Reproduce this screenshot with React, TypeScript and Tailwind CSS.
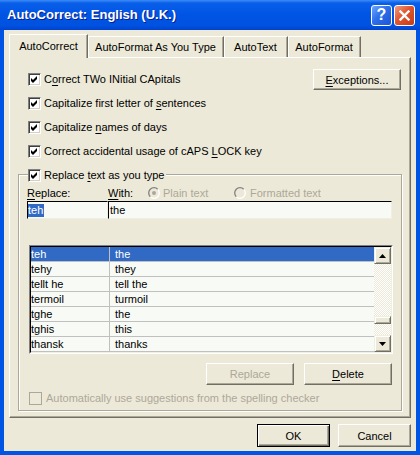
import React from 'react';

const U = ({ children }: { children: React.ReactNode }) => (
  <span className="underline decoration-1 underline-offset-[2px]">{children}</span>
);

const Check = ({ checked = true, disabled = false }: { checked?: boolean; disabled?: boolean }) => (
  <span
    className={`flex h-[13px] w-[13px] shrink-0 items-center justify-center border border-t-[#808080] border-l-[#808080] border-r-white border-b-white shadow-[inset_1px_1px_0_#404040,inset_-1px_-1px_0_#D4D0C8] ${
      disabled ? 'bg-[#ECE9D8]' : 'bg-white'
    }`}
  >
    {checked && (
      <svg width="7" height="7" viewBox="0 0 7 7">
        <polygon points="0,2 2,4 6,0 6,3 2,7 0,5" fill="#000" />
      </svg>
    )}
  </span>
);

const Radio = ({ on, id }: { on?: boolean; id: string }) => (
  <svg width="12" height="12" viewBox="0 0 12 12" className="shrink-0">
    <defs>
      <linearGradient id={id} x1="0" y1="0" x2="1" y2="1">
        <stop offset="0.45" stopColor="#808080" />
        <stop offset="0.55" stopColor="#FFFFFF" />
      </linearGradient>
    </defs>
    <circle cx="6" cy="6" r="5.3" fill="#ECE9D8" stroke={`url(#${id})`} strokeWidth="1.3" />
    {on && <circle cx="6" cy="6" r="2" fill="#ACA899" />}
  </svg>
);

const Btn = ({
  children,
  w = 'w-[88px]',
  h = 'h-[22px]',
  def = false,
  disabled = false,
}: {
  children: React.ReactNode;
  w?: string;
  h?: string;
  def?: boolean;
  disabled?: boolean;
}) => (
  <div
    className={`flex ${w} ${h} items-center justify-center ${
      def
        ? 'border border-black shadow-[inset_1px_1px_0_#FFFFFF,inset_-1px_-1px_0_#716F64,inset_-2px_-2px_0_#ACA899]'
        : 'border border-t-white border-l-white border-r-[#716F64] border-b-[#716F64] shadow-[inset_-1px_-1px_0_#ACA899]'
    } bg-[#ECE9D8] ${disabled ? 'text-[#ACA899]' : 'text-black'}`}
  >
    {children}
  </div>
);

const Arrow = ({ up }: { up?: boolean }) => (
  <svg width="7" height="4" viewBox="0 0 7 4">
    <polygon points={up ? '3.5,0 7,4 0,4' : '0,0 7,0 3.5,4'} fill="#000" />
  </svg>
);

const ScrollBtn = ({ up }: { up?: boolean }) => (
  <div className="flex h-[17px] w-[17px] items-center justify-center border border-t-[#F1EFE2] border-l-[#F1EFE2] border-r-[#716F64] border-b-[#716F64] bg-[#ECE9D8] shadow-[inset_1px_1px_0_#FFFFFF,inset_-1px_-1px_0_#ACA899]">
    <Arrow up={up} />
  </div>
);

const entries: [string, string][] = [
  ['teh', 'the'],
  ['tehy', 'they'],
  ['tellt he', 'tell the'],
  ['termoil', 'turmoil'],
  ['tghe', 'the'],
  ['tghis', 'this'],
  ['thansk', 'thanks'],
];

const tabs = [
  { label: 'AutoFormat As You Type', w: 'w-[136px]' },
  { label: 'AutoText', w: 'w-[64px]' },
  { label: 'AutoFormat', w: 'w-[73px]' },
];

export default function App() {
  return (
    <div className="flex h-[455px] w-[420px] flex-col bg-[#ECE9D8] font-['Liberation_Sans',Arial,sans-serif] text-[11px] leading-[14px] text-black">
      {/* title bar */}
      <div className="flex h-[30px] shrink-0 items-center bg-[linear-gradient(to_bottom,#3C8CF7_0%,#0A5FE9_10%,#0055E5_45%,#0052E0_85%,#0043CF_100%)] pl-[7px] pr-[5px]">
        <span className="text-[13px] font-bold leading-[16px] text-white [text-shadow:1px_1px_0_#0A1E8C]">
          AutoCorrect: English (U.K.)
        </span>
        <div className="ml-auto flex gap-[2px]">
          <div className="flex h-[21px] w-[21px] items-center justify-center rounded-[3px] border border-white bg-[linear-gradient(135deg,#6EA6FF_0%,#2E6FEA_45%,#1B55D6_100%)]">
            <span className="text-[16px] font-bold leading-none text-white">?</span>
          </div>
          <div className="flex h-[21px] w-[21px] items-center justify-center rounded-[3px] border border-white bg-[linear-gradient(135deg,#F19C7E_0%,#E0552F_45%,#C43C17_100%)]">
            <svg width="11" height="11" viewBox="0 0 11 11">
              <path d="M1.5 1.5 L9.5 9.5 M9.5 1.5 L1.5 9.5" stroke="#fff" strokeWidth="2.4" strokeLinecap="square" />
            </svg>
          </div>
        </div>
      </div>

      {/* window body */}
      <div className="flex flex-1 flex-col border-x-4 border-b-4 border-[#0055E5] px-[5px] pt-[4px] pb-[4px]">
        {/* tabs */}
        <div className="flex h-[23px] items-end">
          <div className="relative z-10 -mb-px flex h-[24px] w-[79px] items-center justify-center border-t border-l border-r border-t-white border-l-white border-r-[#716F64] bg-[#ECE9D8] pb-[1px] shadow-[inset_-1px_0_0_#ACA899]">
            AutoCorrect
          </div>
          {tabs.map((t) => (
            <div
              key={t.label}
              className={`flex h-[21px] ${t.w} items-center justify-center border-t border-r border-t-white border-r-[#716F64] bg-[#ECE9D8] shadow-[inset_1px_0_0_#FFFFFF,inset_-1px_0_0_#ACA899]`}
            >
              {t.label}
            </div>
          ))}
        </div>

        {/* tab panel */}
        <div className="flex h-[361px] flex-col border border-t-white border-l-white border-r-[#716F64] border-b-[#716F64] shadow-[inset_-1px_-1px_0_#ACA899]">
          <div className="flex pt-[9px] pl-[18px]">
            <div className="flex flex-col">
              <div className="flex h-[24px] items-center gap-[3px]">
                <Check />
                <span>
                  C<U>o</U>rrect TWo INitial CApitals
                </span>
              </div>
              <div className="flex h-[24px] items-center gap-[3px]">
                <Check />
                <span>
                  Capitalize first letter of <U>s</U>entences
                </span>
              </div>
              <div className="flex h-[24px] items-center gap-[3px]">
                <Check />
                <span>
                  Capitalize <U>n</U>ames of days
                </span>
              </div>
              <div className="flex h-[24px] items-center gap-[3px]">
                <Check />
                <span>
                  Correct accidental usage of cAPS <U>L</U>OCK key
                </span>
              </div>
            </div>
            <div className="mt-[2px] mr-[9px] ml-auto">
              <Btn h="h-[21px]">
                <span>
                  <U>E</U>xceptions...
                </span>
              </Btn>
            </div>
          </div>

          {/* group box */}
          <div className="mx-[8px] mt-[11px] flex flex-col border border-[#ACA899] pb-[5px] shadow-[inset_1px_1px_0_#FFFFFF,1px_1px_0_#FFFFFF]">
            <div className="-mt-[7px] ml-[9px] flex h-[14px] w-fit items-center gap-[3px] bg-[#ECE9D8] pr-[2px]">
              <Check />
              <span>
                Replace <U>t</U>ext as you type
              </span>
            </div>

            <div className="mt-[4px] flex h-[14px] items-center pl-[8px]">
              <span className="w-[81px]">
                <U>R</U>eplace:
              </span>
              <span className="w-[40px]">
                <U>W</U>ith:
              </span>
              <div className="flex w-[86px] items-center gap-[3px] text-[#ACA899]">
                <Radio on id="r1" />
                <span>Plain text</span>
              </div>
              <div className="flex items-center gap-[4px] text-[#ACA899]">
                <Radio id="r2" />
                <span>Formatted text</span>
              </div>
            </div>

            <div className="mt-[1px] flex h-[18px] pl-[8px]">
              <div className="flex w-[81px] items-center border border-t-black border-l-black border-r-[#F1EFE2] border-b-[#F1EFE2] bg-[#F7FAF5]">
                <span className="bg-[#316AC5] pr-[1px] leading-[13px] text-white">teh</span>
              </div>
              <div className="flex w-[284px] items-center border border-t-black border-l-black border-r-[#F1EFE2] border-b-[#F1EFE2] bg-[#F7FAF5] pl-[1px]">
                the
              </div>
            </div>

            {/* list */}
            <div className="mt-[26px] ml-[10px] w-[364px] border border-t-[#808080] border-l-[#808080] border-r-white border-b-white">
              <div className="flex border border-t-black border-l-black border-r-[#F1EFE2] border-b-[#F1EFE2] bg-[#F7FAF5]">
                <div className="flex flex-1 flex-col">
                  {entries.map(([a, b], i) => (
                    <div
                      key={a}
                      className={`flex h-[15px] border-b border-[#C0C0C0] ${
                        i === 0 ? 'bg-[#316AC5] text-white' : ''
                      }`}
                    >
                      <span className="w-[79px] border-r border-[#C0C0C0]">{a}</span>
                      <span className="pl-[5px]">{b}</span>
                    </div>
                  ))}
                </div>
                <div className="flex w-[17px] flex-col">
                  <ScrollBtn up />
                  <div className="flex flex-1 flex-col bg-[repeating-conic-gradient(#ECE9D8_0_25%,#FFFFFF_0_50%)] bg-[length:2px_2px]">
                    <div className="mt-[52px] h-[8px] border border-t-[#F1EFE2] border-l-[#F1EFE2] border-r-[#716F64] border-b-[#716F64] bg-[#ECE9D8] shadow-[inset_1px_1px_0_#FFFFFF,inset_-1px_-1px_0_#ACA899]" />
                  </div>
                  <ScrollBtn />
                </div>
              </div>
            </div>

            <div className="mt-[9px] mr-[9px] flex justify-end gap-[10px]">
              <Btn disabled>Replace</Btn>
              <Btn>
                <span>
                  <U>D</U>elete
                </span>
              </Btn>
            </div>

            <div className="mt-[6px] flex h-[14px] items-center gap-[4px] pl-[10px] text-[#ACA899]">
              <span className="flex h-[13px] w-[13px] border border-[#ACA899] bg-[#ECE9D8]" />
              <span>Automatically use suggestions from the spelling checker</span>
            </div>
          </div>
        </div>

        {/* dialog buttons */}
        <div className="mt-[6px] flex justify-end gap-[8px]">
          <Btn w="w-[73px]" h="h-[23px]" def>
            OK
          </Btn>
          <Btn w="w-[73px]" h="h-[23px]">
            Cancel
          </Btn>
        </div>
      </div>
    </div>
  );
}
